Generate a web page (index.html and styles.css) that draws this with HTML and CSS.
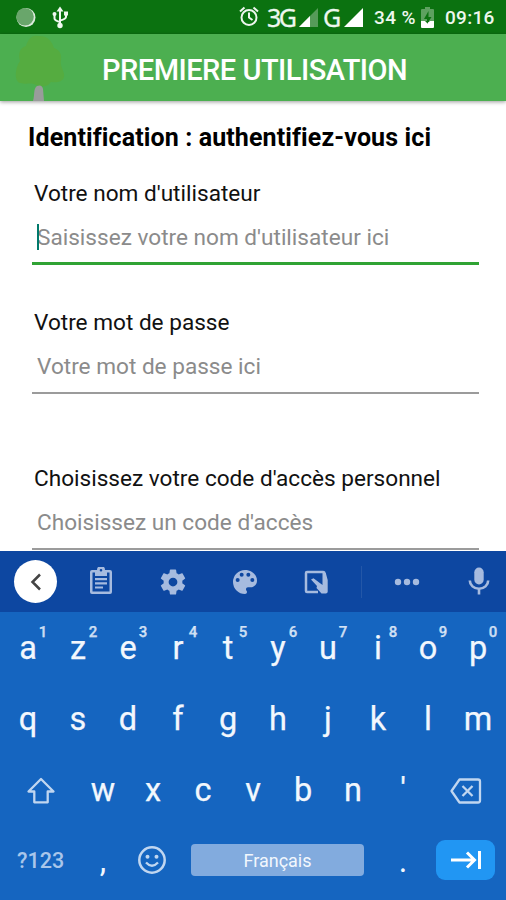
FILE: index.html
```html
<!DOCTYPE html>
<html lang="fr">
<head>
<meta charset="utf-8">
<title>Première utilisation</title>
<link rel="stylesheet" href="styles.css">
</head>
<body>
<div class="phone">
  <header class="status">
    <svg class="status-left" width="80" height="34" viewBox="0 0 80 34">
      <circle cx="26" cy="17.5" r="9.5" fill="#dcebdc"/><circle cx="25" cy="16.7" r="8.8" fill="#69a66b"/>
      <g fill="none" stroke="#f0f8f0" stroke-width="2"><path d="M60 10v15M54.500 14v4.500q0 2 5.500 3.500M66 14v3q0 2-6 3.500"/></g>
      <path d="M60 6.500l3.500 5h-7z" fill="#f0f8f0"/><circle cx="60" cy="25.500" r="2.700" fill="#f0f8f0"/><circle cx="54.500" cy="14" r="2" fill="#f0f8f0"/><path d="M64 11.500h4v4h-4z" fill="#f0f8f0"/>
    </svg>
    <div class="status-right">
      <svg class="alarm" width="20" height="22" viewBox="0 0 20 22"><g fill="none" stroke="#edf6ed" stroke-width="2"><circle cx="10" cy="11.500" r="7.500"/><path d="M10 6.500v5l3.500 2.500M1 5.500l4.500-4M19 5.500l-4.500-4"/></g></svg>
      <span class="net net-3g">3G</span>
      <svg class="signal-a" width="20" height="20" viewBox="0 0 20 20"><path d="M19 0v19H0z" fill="#569b59"/><path d="M11 8v11H0z" fill="#fff"/></svg>
      <span class="net net-g">G</span>
      <svg class="signal-b" width="20" height="20" viewBox="0 0 20 20"><path d="M19 0v19H0z" fill="#fff"/></svg>
      <span class="pct">34 %</span>
      <svg class="battery" width="13" height="22" viewBox="0 0 13 22"><path d="M4 0h5v2h3q1 0 1 1v11H0V3q0-1 1-1h3z" fill="#5da160"/><path d="M0 14h4l2 2 3-2h4v6q0 1-1 1H1q-1 0-1-1z" fill="#fff"/><path d="M7.500 4L3 12h3v5l4.500-7H7.500z" fill="#0b7210"/></svg>
      <span class="clock">09:16</span>
    </div>
  </header>
  <div class="appbar">
    <svg class="tree" width="80" height="67" viewBox="0 0 80 67"><path d="M38 2c-7-1-10 4-12 10-7 2-8 9-6 15-5 7-6 20 0 22 8 2 10-1 16 2 8 3 12 1 15-3 8 1 14-1 13-8-1-5-4-8-3-14 1-7-2-10-7-12C52 7 47 1 38 2z" fill="#55ac40"/><path d="M33 67c2-6 0-12 4-15q5-2 6 3l1 12z" fill="#999c9b"/></svg>
    <h1>PREMIERE UTILISATION</h1>
  </div>
  <main class="form">
    <h2>Identification : authentifiez-vous ici</h2>
    <section class="field first">
      <div class="label">Votre nom d'utilisateur</div>
      <div class="input focus"><span>Saisissez votre nom d'utilisateur ici</span><i class="caret"></i></div>
    </section>
    <section class="field second">
      <div class="label">Votre mot de passe</div>
      <div class="input"><span>Votre mot de passe ici</span></div>
    </section>
    <section class="field third">
      <div class="label">Choisissez votre code d'accès personnel</div>
      <div class="input"><span>Choisissez un code d'accès</span></div>
    </section>
  </main>
  <div class="keyboard">
    <div class="tools">
      <span class="back"><svg width="42" height="42" viewBox="0 0 42 42"><path d="M25 13.500L17.500 21l7.500 7.500" fill="none" stroke="#444" stroke-width="2.500"/></svg></span>
      <svg class="t-clip" width="24" height="28" viewBox="0 0 24 28"><path fill="#a6bbdf" fill-rule="evenodd" d="M3 3h5a4 4 0 0 1 8 0h5q2 0 2 2v20q0 2-2 2H3q-2 0-2-2V5q0-2 2-2zm.500 2.500v19h17v-19H18V9H6V5.500zM12 2a1.300 1.300 0 1 0 0 2.600A1.300 1.300 0 0 0 12 2zM6 11h12v2.200H6zm0 4.200h12v2.200H6zm0 4.200h8v2.200H6z"/></svg>
      <svg class="t-gear" width="30" height="30" viewBox="0 0 24 24"><path fill="#a6bbdf" d="M19.430 12.980c.04-.32.070-.64.070-.98s-.03-.66-.07-.98l2.110-1.650c.19-.15.240-.42.120-.64l-2-3.460c-.12-.22-.39-.3-.61-.22l-2.490 1c-.52-.4-1.080-.73-1.690-.98l-.38-2.650C14.460 2.180 14.250 2 14 2h-4c-.25 0-.46.180-.49.420l-.38 2.650c-.61.250-1.170.590-1.690.980l-2.490-1c-.23-.09-.49 0-.61.220l-2 3.460c-.13.220-.07.490.12.640l2.110 1.650c-.04.320-.07.650-.07.980s.03.660.070.980l-2.110 1.650c-.19.150-.24.420-.12.640l2 3.460c.12.220.39.300.61.220l2.490-1c.52.400 1.080.730 1.690.980l.38 2.650c.03.240.24.420.49.420h4c.25 0 .46-.18.490-.42l.38-2.650c.61-.25 1.170-.59 1.690-.98l2.490 1c.23.090.49 0 .61-.22l2-3.460c.12-.22.070-.49-.12-.64zM12 15.500a3.500 3.500 0 1 1 0-7 3.500 3.500 0 0 1 0 7z"/></svg>
      <svg class="t-palette" width="32" height="32" viewBox="0 0 24 24"><path fill="#a6bbdf" d="M12 3a9 9 0 0 0 0 18c.83 0 1.500-.67 1.500-1.500 0-.39-.15-.74-.39-1.010-.23-.26-.38-.61-.38-.99 0-.83.670-1.500 1.500-1.500H16c2.760 0 5-2.240 5-5 0-4.420-4.030-8-9-8zm-5.500 9a1.500 1.500 0 1 1 0-3 1.500 1.500 0 0 1 0 3zm3-4a1.500 1.500 0 1 1 0-3 1.500 1.500 0 0 1 0 3zm5 0a1.500 1.500 0 1 1 0-3 1.500 1.500 0 0 1 0 3zm3 4a1.500 1.500 0 1 1 0-3 1.500 1.500 0 0 1 0 3z"/></svg>
      <svg class="t-hand" width="24" height="24" viewBox="0 0 24 24"><path fill="none" stroke="#a6bbdf" stroke-width="2.500" d="M14 22H3q-1 0-1-1V3q0-1 1-1h16q1.500 0 1.500 2v7"/><path fill="#a6bbdf" d="M7 9.500l2.500-1.300L18.500 15V3h3.300L23.700 10v11.500q0 2-3 2h-3.200L12.500 18l.5-2z"/></svg>
      <span class="divider"></span>
      <svg class="t-dots" width="26" height="8" viewBox="0 0 26 8"><g fill="#a6bbdf"><circle cx="4" cy="4" r="3.200"/><circle cx="13" cy="4" r="3.200"/><circle cx="22" cy="4" r="3.200"/></g></svg>
      <svg class="t-mic" width="22" height="28" viewBox="0 0 22 28"><rect x="6.300" y="0.500" width="9.400" height="17" rx="4.700" fill="#a6bbdf"/><path d="M1.800 13.500a9.200 8.300 0 0 0 18.400 0M11 22v5.500" fill="none" stroke="#a6bbdf" stroke-width="2.600"/></svg>
    </div>
    <div class="row">
      <span class="key">a<sup>1</sup></span><span class="key">z<sup>2</sup></span><span class="key">e<sup>3</sup></span><span class="key">r<sup>4</sup></span><span class="key">t<sup>5</sup></span><span class="key">y<sup>6</sup></span><span class="key">u<sup>7</sup></span><span class="key">i<sup>8</sup></span><span class="key">o<sup>9</sup></span><span class="key">p<sup>0</sup></span>
    </div>
    <div class="row">
      <span class="key">q</span><span class="key">s</span><span class="key">d</span><span class="key">f</span><span class="key">g</span><span class="key">h</span><span class="key">j</span><span class="key">k</span><span class="key">l</span><span class="key">m</span>
    </div>
    <div class="row">
      <span class="wide"><svg width="30" height="28" viewBox="0 0 30 28"><path d="M15 2L2.500 14.500h5.800v10.800h13.400V14.500h5.800z" fill="none" stroke="#c0d6f0" stroke-width="2.300" stroke-linejoin="round"/></svg></span>
      <span class="key">w</span><span class="key">x</span><span class="key">c</span><span class="key">v</span><span class="key">b</span><span class="key">n</span><span class="key">'</span>
      <span class="wide erase"><svg width="32" height="26" viewBox="0 0 32 26"><path d="M9.500 1.500H28q2 0 2 2v19q0 2-2 2H9.500L1.500 13z" fill="none" stroke="#c0d6f0" stroke-width="2.300" stroke-linejoin="round"/><path d="M12.500 8l10 10M22.500 8l-10 10" stroke="#c0d6f0" stroke-width="2.300"/></svg></span>
    </div>
    <div class="row bottom">
      <span class="sym">?123</span>
      <span class="comma">,</span>
      <svg class="smile" width="30" height="30" viewBox="0 0 30 30"><circle cx="15" cy="15" r="12.700" fill="none" stroke="#c0d6f0" stroke-width="2.500"/><circle cx="10.500" cy="11.800" r="2" fill="#c0d6f0"/><circle cx="19.500" cy="11.800" r="2" fill="#c0d6f0"/><path d="M9 17.500q6 6.500 12 0" fill="none" stroke="#c0d6f0" stroke-width="2.300"/></svg>
      <span class="space">Français</span>
      <span class="dot">.</span>
      <span class="next"><svg width="34" height="22" viewBox="0 0 34 22"><path d="M2 11h23M18 3.500l7.500 7.500-7.500 7.500M30.500 2v18" fill="none" stroke="#fff" stroke-width="3"/></svg></span>
    </div>
  </div>
</div>
</body>
</html>
```

FILE: styles.css
```css
* { box-sizing: border-box; }
body { margin: 0; background: #fff; font-family: Roboto, "Liberation Sans", sans-serif; }
svg { display: block; flex: none; }
.phone { width: 506px; height: 900px; overflow: hidden; display: flex; flex-direction: column; }

.status { height: 34px; flex: none; background: #0b7210; color: #eef7ee; display: flex; justify-content: space-between; }
.status-right { display: flex; align-items: center; height: 34px; width: 267px; white-space: nowrap; }
.status-right span { flex: none; line-height: 34px; padding-top: 2px; }
.status-right .net { font-family: "Noto Sans", sans-serif; font-size: 25px; letter-spacing: -2.5px; padding-top: 0; -webkit-text-stroke: .3px #eef7ee; }
.net-3g { width: 32px; margin-left: 8px; }
.net-g { width: 20px; margin-left: 4px; }
.signal-a, .signal-b { margin-top: 1px; }
.signal-b { margin-left: 1px; }
.pct { font-size: 19px; font-weight: 500; letter-spacing: .4px; width: 43px; margin-left: 10px; }
.battery { margin-left: 4px; margin-top: 2px; }
.clock { font-size: 19px; font-weight: 500; letter-spacing: .3px; margin-left: 11px; }

.appbar { height: 67px; flex: none; background: #4caf50; display: flex; align-items: center; box-shadow: 0 1px 4px rgba(0,0,0,.4); z-index: 1; }
.tree { margin-right: 22px; }
h1 { margin: 5px 0 0; color: #fff; font-size: 29px; line-height: 34px; font-weight: 500; white-space: nowrap; letter-spacing: -.5px; }

.form { height: 450px; flex: none; padding: 20px 27px 0 29px; overflow: hidden; white-space: nowrap; }
h2 { margin: 0 0 0 -1px; font-size: 25px; line-height: 34px; font-weight: 700; color: #000; letter-spacing: .12px; }
.field { padding-left: 3px; }
.label { padding-left: 2px; font-size: 22.6px; line-height: 30px; color: #111; }
.input { position: relative; height: 56px; padding: 14px 0 0 5px; font-size: 22.6px; line-height: 30px; color: #8b8b8b; border-bottom: 2px solid #9b9b9b; }
.focus { border-bottom: 3px solid #30a334; }
.caret { position: absolute; left: 5px; top: 15px; width: 2px; height: 26px; background: #00796b; }
.first { margin-top: 24px; }
.second { margin-top: 43px; }
.third { margin-top: 70px; }

.keyboard { height: 349px; flex: none; background: #1565c0; color: #f2f7fd; }
.tools { height: 61px; background: #0d47a1; display: flex; align-items: center; }
.back { width: 43px; height: 43px; margin-left: 14px; border-radius: 50%; background: #fff; display: grid; place-items: center; }
.t-clip { margin-left: 32px; margin-top: -2px; }
.t-gear { margin-left: 45px; margin-top: 1px; }
.t-palette { margin-left: 41px; }
.t-hand { margin-left: 43px; }
.divider { width: 1px; height: 32px; margin-left: 33px; background: #2357a8; }
.t-dots { margin-left: 32px; }
.t-mic { margin-left: 48px; margin-top: -1px; }
.row { height: 71px; padding: 0 3px; display: flex; font-size: 32.5px; }
.key { position: relative; width: 50px; height: 71px; flex: none; text-align: center; line-height: 73px; -webkit-text-stroke: .25px #f2f7fd; }
.key sup { position: absolute; right: 2px; top: 12px; font-size: 15px; line-height: 16px; font-weight: 500; color: #c6daf2; width: 16px; text-align: center; }
.wide { width: 75px; height: 71px; flex: none; display: grid; place-items: center; padding-top: 3px; }
.bottom { padding: 0; height: 75px; align-items: flex-start; }
.sym { width: 64px; margin-left: 17px; font-size: 21.5px; line-height: 71px; font-weight: 500; color: #a9c6ea; }
.comma { width: 20px; margin-left: 12px; text-align: center; line-height: 72px; }
.smile { margin-left: 24px; margin-top: 20px; }
.space { width: 173px; height: 32px; margin: 19px 0 0 24px; border-radius: 4px; background: #82abde; font-size: 18px; line-height: 33px; text-align: center; }
.dot { width: 20px; margin-left: 29px; text-align: center; line-height: 72px; }
.next { width: 59px; height: 40px; margin: 15px 0 0 23px; border-radius: 9px; background: #2196f3; display: grid; place-items: center; }
```
